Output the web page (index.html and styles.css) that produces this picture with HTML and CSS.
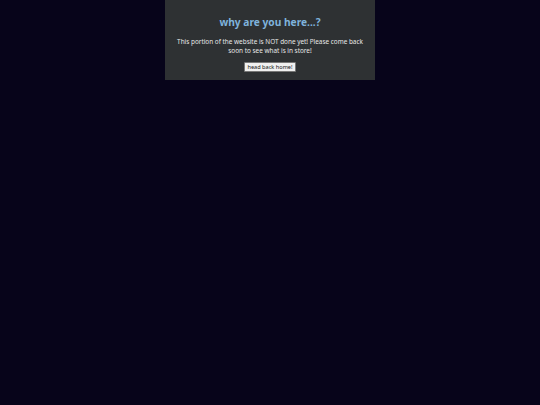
FILE: index.html
```html
<!DOCTYPE html>
<html>
<head>
<meta charset="utf-8">
<link rel="stylesheet" href="styles.css">
</head>
<body>
<div class="page">
  <div class="card">
    <h1 class="title">why are you here...?</h1>
    <p class="text">This portion of the website is NOT done yet! Please come back soon to see what is in store!</p>
    <button class="btn">head back home!</button>
  </div>
</div>
</body>
</html>
```
FILE: styles.css
```css
html, body {
  margin: 0;
  padding: 0;
  background: #07041a;
  height: 100%;
}
.page {
  display: flex;
  justify-content: center;
}
.card {
  width: 210px;
  box-sizing: border-box;
  background: #2e3133;
  padding: 15px 6px 8px;
  text-align: center;
  font-family: "Noto Sans", sans-serif;
}
.title {
  margin: 0;
  font-size: 10.2px;
  font-weight: 700;
  color: #7fb3dc;
  line-height: 14px;
}
.text {
  margin: 8px 0 0;
  font-size: 6.4px;
  line-height: 9px;
  color: #e6e6e6;
}
.btn {
  display: block;
  margin: 7px auto 0;
  font-family: "Noto Sans", sans-serif;
  font-size: 5.6px;
  padding: 1px 2px;
  line-height: 6px;
  background: #f0f0f0;
  color: #111;
  border: 1px solid #777;
  border-radius: 1px;
}
```
